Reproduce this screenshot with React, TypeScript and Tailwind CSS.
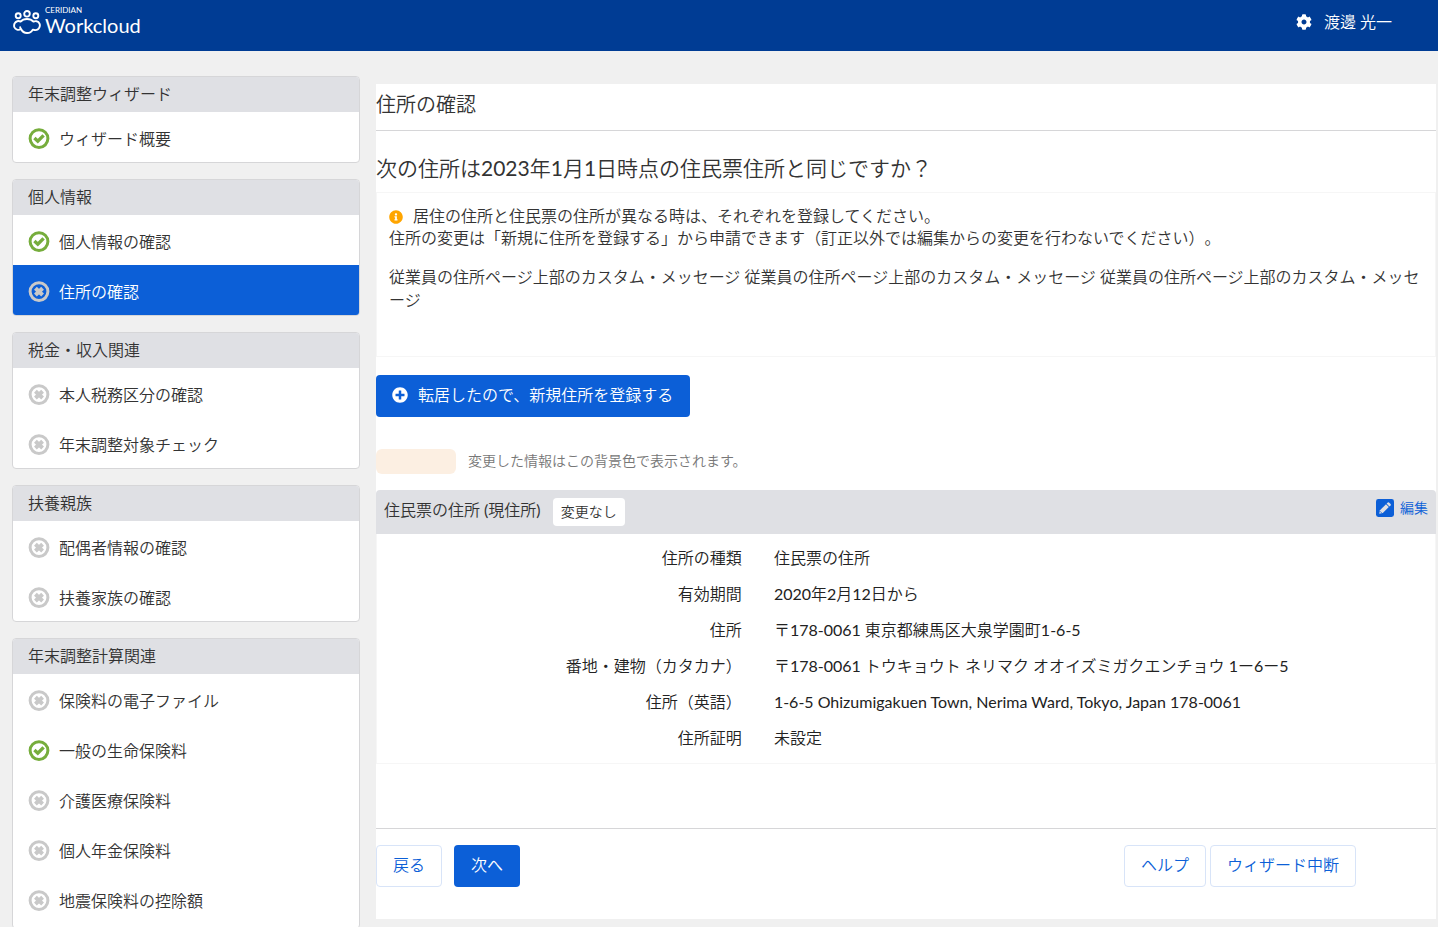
import React from 'react';
import { FaCog, FaInfoCircle, FaPlusCircle } from 'react-icons/fa';

type Status = 'done' | 'pending';

interface Step {
  label: string;
  status: Status;
  active?: boolean;
}

interface StepGroup {
  title: string;
  steps: Step[];
}

const groups: StepGroup[] = [
  {
    title: '年末調整ウィザード',
    steps: [{ label: 'ウィザード概要', status: 'done' }],
  },
  {
    title: '個人情報',
    steps: [
      { label: '個人情報の確認', status: 'done' },
      { label: '住所の確認', status: 'pending', active: true },
    ],
  },
  {
    title: '税金・収入関連',
    steps: [
      { label: '本人税務区分の確認', status: 'pending' },
      { label: '年末調整対象チェック', status: 'pending' },
    ],
  },
  {
    title: '扶養親族',
    steps: [
      { label: '配偶者情報の確認', status: 'pending' },
      { label: '扶養家族の確認', status: 'pending' },
    ],
  },
  {
    title: '年末調整計算関連',
    steps: [
      { label: '保険料の電子ファイル', status: 'pending' },
      { label: '一般の生命保険料', status: 'done' },
      { label: '介護医療保険料', status: 'pending' },
      { label: '個人年金保険料', status: 'pending' },
      { label: '地震保険料の控除額', status: 'pending' },
    ],
  },
];

const addressRows = [
  { label: '住所の種類', value: '住民票の住所' },
  { label: '有効期間', value: '2020年2月12日から' },
  { label: '住所', value: '〒178-0061 東京都練馬区大泉学園町1-6-5' },
  {
    label: '番地・建物（カタカナ）',
    value: '〒178-0061 トウキョウト ネリマク オオイズミガクエンチョウ 1ー6ー5',
  },
  {
    label: '住所（英語）',
    value: '1-6-5 Ohizumigakuen Town, Nerima Ward, Tokyo, Japan 178-0061',
  },
  { label: '住所証明', value: '未設定' },
];

const Logo: React.FC = () => (
  <a href="#home" className="flex items-start gap-1 text-white">
    <svg viewBox="0 0 28 25" className="mt-1 h-[25px] w-7" fill="none" stroke="currentColor" strokeWidth="1.9">
      <circle cx="5.2" cy="5.8" r="2.5" />
      <circle cx="14" cy="3.8" r="2.8" />
      <circle cx="22.8" cy="5.8" r="2.5" />
      <path
        strokeLinecap="round"
        strokeLinejoin="round"
        d="M7.6 11.6C5.4 10.4 2.8 11.2 1.6 13.4C.4 16.2 1.4 18.8 4 19.6C5.2 20 6.8 19.8 8 19C9.4 21.8 11.4 23 14 23C16.6 23 18.6 21.8 19.8 19.6C22.4 20.6 25.2 19.8 26.4 17.4C27.6 14.8 26.4 11.8 23.6 11.2C22.4 11 21.2 11.2 20.4 11.6C18.8 9.8 16.6 9 14 9C11.4 9 9.2 9.8 7.6 11.6ZM8 19C7.4 18.4 7.2 17.8 7.2 17.2"
      />
    </svg>
    <span className="flex flex-col">
      <span className="text-[8px] leading-[8px]">CERIDIAN</span>
      <span className="text-xl leading-[22px]">Workcloud</span>
    </span>
  </a>
);

const StatusIcon: React.FC<{ status: Status }> = ({ status }) => {
  if (status === 'done') {
    return (
      <svg viewBox="0 0 22 22" className="h-[22px] w-[22px] shrink-0 text-[#76ad3c]" fill="none" stroke="currentColor">
        <circle cx="11" cy="10.6" r="8.9" strokeWidth="3" />
        <path d="M6.4 10L9.8 13.2L15.6 7.4" strokeWidth="3.4" />
      </svg>
    );
  }
  return (
    <svg viewBox="0 0 22 22" className="h-[22px] w-[22px] shrink-0 text-[#c9c9c9]" fill="none" stroke="currentColor">
      <circle cx="11" cy="10.6" r="8.9" strokeWidth="3" />
      <path d="M7.4 7.2L14.6 14M14.6 7.2L7.4 14" strokeWidth="4" />
    </svg>
  );
};

const EditIcon: React.FC = () => (
  <svg viewBox="0 0 18 18" className="h-[18px] w-[18px]">
    <rect width="18" height="18" rx="2.4" fill="#0c5fd7" />
    <g fill="#dfe0e4">
      <path d="M3.2 14.8L4 11.2L10 5.2L12.8 8L6.8 14Z" />
      <path d="M10.6 4.6L11.8 3.4Q12.4 2.9 13 3.4L14.6 5Q15.1 5.6 14.6 6.2L13.4 7.4Z" />
    </g>
    <path d="M4.2 12.4L5.6 13.8" stroke="#0c5fd7" strokeWidth="0.9" />
  </svg>
);

const SidebarGroup: React.FC<{ group: StepGroup }> = ({ group }) => (
  <section className="overflow-hidden rounded border border-[#d6d6d8] bg-white last:pb-1">
    <h2 className="bg-[#dfe0e4] px-[15px] pt-[5px] pb-[7px] text-base leading-[23px]">{group.title}</h2>
    <ul>
      {group.steps.map((step) => (
        <li key={step.label}>
          <a
            href="#step"
            aria-current={step.active ? 'step' : undefined}
            className={`flex h-[50px] items-center gap-[9px] px-[15px] pt-[3px] text-base ${
              step.active ? 'bg-[#0c5fd7] text-white' : ''
            }`}
          >
            <StatusIcon status={step.status} />
            <span>{step.label}</span>
          </a>
        </li>
      ))}
    </ul>
  </section>
);

const OutlineButton: React.FC<{ children: React.ReactNode }> = ({ children }) => (
  <button
    type="button"
    className="h-[42px] rounded border border-[#d8e4f8] bg-white px-4 pb-[3px] text-base text-[#0c5fd7]"
  >
    {children}
  </button>
);

const App: React.FC = () => (
  <div
    className="min-h-screen bg-[#f0f0f0] font-['Lato','Noto_Sans_CJK_JP_DemiLight','Noto_Sans_CJK_JP_Light','Noto_Sans_CJK_JP',sans-serif] font-normal text-[#333] [text-spacing-trim:space-all]"
    lang="ja"
  >
    <header className="flex h-[51px] items-start justify-between bg-[#003c94] pt-1.5 pr-[46px] pl-[13px]">
      <Logo />
      <button type="button" className="flex items-center gap-3 pt-1 text-base text-white">
        <FaCog className="h-4 w-4" />
        渡邊 光一
      </button>
    </header>

    <div className="flex items-start gap-4 pt-[25px] pr-0.5">
      <nav className="flex w-[360px] shrink-0 flex-col gap-4 pl-3">
        {groups.map((group) => (
          <SidebarGroup key={group.title} group={group} />
        ))}
      </nav>

      <main className="mt-2 min-w-0 flex-1 bg-white pb-8">
        <h1 className="border-b border-[#d6d6d8] pt-[5px] pb-[11px] text-xl leading-[30px]">住所の確認</h1>

        <h2 className="mt-[22px] text-[21px] leading-[30px]">
          次の住所は2023年1月1日時点の住民票住所と同じですか？
        </h2>

        <div className="mt-[9px] min-h-[165px] border border-[#f6f6f6] px-3 py-3 text-base leading-[22px]">
          <p>
            <FaInfoCircle className="mr-2.5 inline h-3.5 w-3.5 align-[-2px] text-[#ffa500]" />
            居住の住所と住民票の住所が異なる時は、それぞれを登録してください。
            <br />
            住所の変更は「新規に住所を登録する」から申請できます（訂正以外では編集からの変更を行わないでください）。
          </p>
          <p className="mt-4 leading-[23px]">
            従業員の住所ページ上部のカスタム・メッセージ 従業員の住所ページ上部のカスタム・メッセージ 従業員の住所ページ上部のカスタム・メッセージ
          </p>
        </div>

        <button
          type="button"
          className="mt-[18px] flex h-[42px] items-center gap-2.5 rounded bg-[#0c5fd7] pr-[17px] pl-4 pb-0.5 text-base text-white"
        >
          <FaPlusCircle className="h-4 w-4" />
          転居したので、新規住所を登録する
        </button>

        <div className="mt-8 flex items-center gap-3 text-sm text-[#777]">
          <span className="h-[25px] w-20 rounded-md bg-[#fcefe2]" />
          <span className="pb-0.5">変更した情報はこの背景色で表示されます。</span>
        </div>

        <section className="mt-4">
          <div className="flex h-11 items-center rounded-t bg-[#dfe0e4] px-2">
            <h3 className="pb-1 text-base">住民票の住所 (現住所)</h3>
            <span className="ml-3 rounded bg-white px-2 py-1 text-sm">変更なし</span>
            <a href="#edit" className="mb-2 ml-auto flex items-center gap-1.5 text-sm text-[#0c5fd7]">
              <EditIcon />
              編集
            </a>
          </div>
          <dl className="border border-t-0 border-[#f6f6f6] pt-1.5 pb-[7px] text-base text-[#222]">
            {addressRows.map((row) => (
              <div key={row.label} className="flex h-9 items-center">
                <dt className="w-[36%] shrink-0 pr-4 text-right">{row.label}</dt>
                <dd className="pl-4">{row.value}</dd>
              </div>
            ))}
          </dl>
        </section>

        <footer className="mt-16 flex items-center border-t border-[#d6d6d8] pt-4 pr-20">
          <OutlineButton>戻る</OutlineButton>
          <button type="button" className="ml-3 h-[42px] rounded bg-[#0c5fd7] px-[17px] pb-[3px] text-base text-white">
            次へ
          </button>
          <div className="ml-auto flex gap-1">
            <OutlineButton>ヘルプ</OutlineButton>
            <OutlineButton>ウィザード中断</OutlineButton>
          </div>
        </footer>
      </main>
    </div>
  </div>
);

export default App;
